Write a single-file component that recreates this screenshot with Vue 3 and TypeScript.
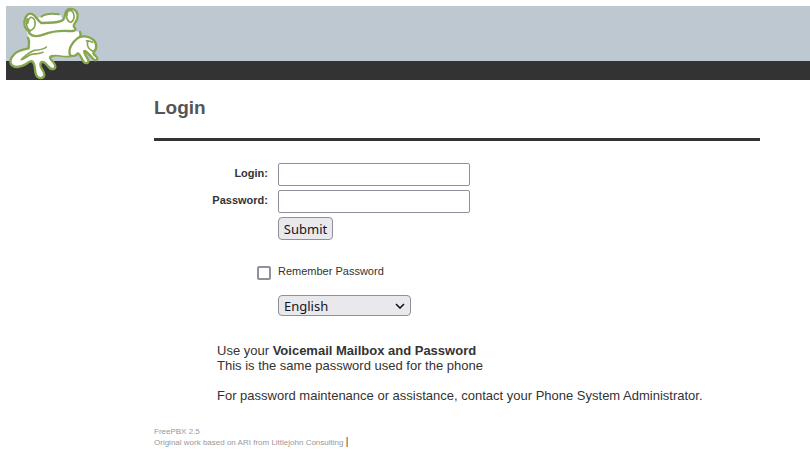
<script setup lang="ts">
import { ref } from 'vue'

const login = ref('')
const password = ref('')
const remember = ref(false)
const language = ref('English')
const languages: string[] = ['English', 'French', 'German', 'Italian', 'Spanish']
</script>

<template>
  <div class="page">
    <header class="banner">
      <svg class="frog" viewBox="18 18 312 222" role="img" aria-label="FreePBX">
        <g fill="#fff" stroke="#86a650" stroke-width="7" stroke-linecap="round" stroke-linejoin="round">
          <path d="M122 50C136 40 158 39 180 43L190 62L124 70L108 58Z" stroke="none" />
          <path d="M124 50C136 41 156 40 177 43" fill="none" stroke-width="6" />
          <path d="M84 112C90 124 86 134 86 145C70 148 50 152 42 164C31 174 26 190 38 197C51 206 66 199 78 192C88 184 96 180 100 188C107 199 103 215 109 226C115 238 131 237 133 225C134 213 120 205 121 193C122 184 130 184 137 191C146 202 152 210 162 207C171 201 163 189 154 180C147 173 149 169 158 168C176 165 184 173 212 167C204 148 215 127 240 118L240 95L105 84L82 96Z" stroke="none" />
          <path d="M84 113C90 124 86 134 86 145C70 148 50 152 42 164C31 174 26 190 38 197C51 206 66 199 78 192C88 184 96 180 100 188C107 199 103 215 109 226C115 238 131 237 133 225C134 213 120 205 121 193C122 184 130 184 137 191C146 202 152 210 162 207C171 201 163 189 154 180C147 173 149 169 158 168" fill="none" />
          <path d="M64 179C73 176 84 167 95 163C108 161 119 162 129 157M64 179C77 165 89 157 103 151C117 149 129 150 139 141" fill="none" stroke-width="5" />
          <path d="M153 170C172 160 183 174 211 169" fill="none" stroke-width="5" />
          <path d="M89 94C77 89 72 77 73 65C75 47 86 38 96 42C109 47 111 61 124 69C150 67 173 71 189 60C199 51 190 30 209 27C227 24 235 39 232 55C229 69 214 75 224 83C232 92 218 94 205 93C168 91 150 96 132 103C112 111 95 108 87 98" />
          <path d="M82 56C76 67 79 85 90 92C101 88 107 78 105 66C104 58 98 51 92 52C88 53 85 60 83 70" fill="none" stroke-width="5" />
          <path d="M200 36C196 49 202 66 213 67C226 59 225 35 211 31C205 31 201 39 201 46" fill="none" stroke-width="5" />
          <path d="M240 96C244 104 242 110 236 116" fill="none" />
          <path d="M210 166C204 147 217 126 232 115C245 106 265 108 278 118C290 126 292 145 283 154C278 158 279 162 287 168C298 178 288 185 280 177C270 167 260 153 253 153C251 161 263 174 265 181C267 191 255 192 250 184C242 171 239 159 233 160C228 169 217 169 210 166Z" />
          <path d="M259 123C266 122 272 124 278 127M263 125C259 139 268 151 282 154" fill="none" stroke-width="5" />
        </g>
      </svg>
    </header>

    <main class="content">
      <h1>Login</h1>

      <form @submit.prevent>
        <div class="row">
          <label class="caption" for="login">Login:</label>
          <input id="login" v-model="login" class="field" type="text" />
        </div>
        <div class="row">
          <label class="caption" for="password">Password:</label>
          <input id="password" v-model="password" class="field" type="password" />
        </div>
        <div class="row actions">
          <button class="submit" type="submit">Submit</button>
        </div>
        <div class="row remember">
          <input id="remember" v-model="remember" class="check" type="checkbox" />
          <label for="remember">Remember Password</label>
        </div>
        <div class="row actions">
          <div class="picker">
            <select v-model="language" aria-label="Language">
              <option v-for="name in languages" :key="name">{{ name }}</option>
            </select>
            <svg class="chevron" viewBox="0 0 10 6" aria-hidden="true">
              <path d="M1 1l4 4 4-4" fill="none" stroke="#15141a" stroke-width="1.6" />
            </svg>
          </div>
        </div>
      </form>

      <div class="help">
        <p>Use your <b>Voicemail Mailbox and Password</b><br />This is the same password used for the phone</p>
        <p>For password maintenance or assistance, contact your Phone System Administrator.</p>
      </div>

      <footer>
        FreePBX 2.5<br />
        Original work based on ARI from Littlejohn Consulting <span class="bar">|</span>
      </footer>
    </main>
  </div>
</template>

<style>
body {
  background: #fff;
}
</style>

<style scoped>
.page {
  padding: 6px 0 0 6px;
  color: #333;
  font-family: "Liberation Sans", Arial, sans-serif;
  font-size: 11px;
}

.banner {
  background: linear-gradient(#bec8d1 55px, #333 55px);
}

.frog {
  display: block;
  width: 104px;
  height: 74px;
}

.content {
  margin: 0 50px 0 148px;
}

h1 {
  margin: 0 0 22px;
  padding: 16px 0 19px;
  border-bottom: 3px solid #333;
  color: #555;
  font-size: 19px;
  line-height: 23px;
}

.row {
  display: grid;
  grid-template-columns: 114px auto;
  column-gap: 10px;
  justify-content: start;
  margin-bottom: 4px;
}

.caption {
  padding-top: 4px;
  font-weight: bold;
  line-height: 13px;
  text-align: right;
}

.field {
  box-sizing: border-box;
  width: 192px;
  height: 23px;
  padding: 1px 4px;
  border: 1px solid #8f8f9d;
  border-radius: 2px;
  background: #fff;
  font: 13px "Noto Sans", sans-serif;
}

.submit,
select {
  box-sizing: border-box;
  margin: 0;
  border: 1px solid #8f8f9d;
  border-radius: 4px;
  background: #e9e9ed;
  color: #15141a;
  font: 13px "Noto Sans", sans-serif;
}

.actions > * {
  grid-column: 2;
  justify-self: start;
}

.submit {
  width: 55px;
  height: 23px;
  padding: 0;
}

.remember {
  margin: 24px 0 15px;
  line-height: 14px;
}

.check {
  appearance: none;
  box-sizing: border-box;
  justify-self: end;
  width: 14px;
  height: 14px;
  margin: 2px -3px 0 0;
  border: 2px solid #8f8f9d;
  border-radius: 2px;
  background: #fff;
}

.check:checked {
  background: #0060df;
}

.picker {
  display: grid;
  align-items: center;
}

.picker > * {
  grid-area: 1 / 1;
}

select {
  appearance: none;
  width: 133px;
  height: 21px;
  padding: 0 24px 0 5px;
}

.chevron {
  justify-self: end;
  width: 10px;
  height: 6px;
  margin-right: 6px;
  pointer-events: none;
}

.help {
  margin: 27px 0 0 63px;
  font-size: 13px;
  line-height: 15px;
}

.help p {
  margin: 0 0 15px;
}

footer {
  margin-top: 24px;
  color: #999;
  font-size: 8px;
  line-height: 10px;
}

.bar {
  color: #333;
  font-size: 10px;
}
</style>
